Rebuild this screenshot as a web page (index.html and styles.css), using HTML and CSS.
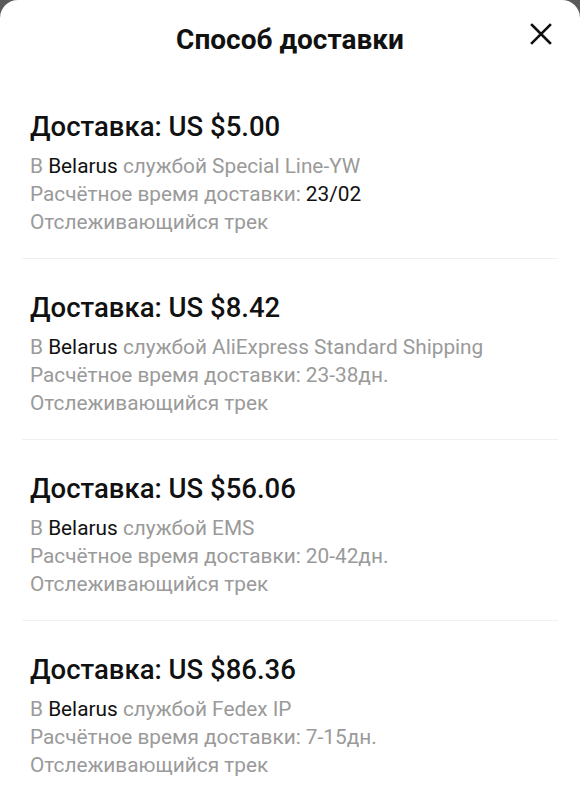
FILE: index.html
```html
<!DOCTYPE html>
<html lang="ru">
<head>
    <meta charset="UTF-8">
    <meta name="viewport" content="width=device-width, initial-scale=1.0">
    <title>Способ доставки</title>
    <link rel="stylesheet" href="styles.css">
</head>
<body>

<div class="sheet">
    <div class="sheet-head">
        <span></span>
        <h1 class="sheet-title">Способ доставки</h1>
        <button class="close-btn" aria-label="Закрыть">
            <svg width="22" height="22" viewBox="0 0 22 22"><path d="M2 2 L20 20 M20 2 L2 20" stroke="#111" stroke-width="2.6" stroke-linecap="square" fill="none"/></svg>
        </button>
    </div>

    <div class="ship-list">
        <div class="ship-item">
            <div class="ship-price">Доставка: US $5.00</div>
            <div class="ship-line">В <b>Belarus</b> службой Special Line-YW</div>
            <div class="ship-line">Расчётное время доставки: <b>23/02</b></div>
            <div class="ship-line">Отслеживающийся трек</div>
        </div>
        <div class="ship-item">
            <div class="ship-price">Доставка: US $8.42</div>
            <div class="ship-line">В <b>Belarus</b> службой AliExpress Standard Shipping</div>
            <div class="ship-line">Расчётное время доставки: 23-38дн.</div>
            <div class="ship-line">Отслеживающийся трек</div>
        </div>
        <div class="ship-item">
            <div class="ship-price">Доставка: US $56.06</div>
            <div class="ship-line">В <b>Belarus</b> службой EMS</div>
            <div class="ship-line">Расчётное время доставки: 20-42дн.</div>
            <div class="ship-line">Отслеживающийся трек</div>
        </div>
        <div class="ship-item">
            <div class="ship-price">Доставка: US $86.36</div>
            <div class="ship-line">В <b>Belarus</b> службой Fedex IP</div>
            <div class="ship-line">Расчётное время доставки: 7-15дн.</div>
            <div class="ship-line">Отслеживающийся трек</div>
        </div>
    </div>
</div>

</body>
</html>
```

FILE: styles.css
```css
:root { --ink: #111; --muted: #9a9a9a; --line: #f0f0f0; --backdrop: #5a5a5a; }

body { margin: 0; background: var(--backdrop); font-family: Roboto, "Noto Sans", sans-serif; color: var(--ink); }

/* --- Sheet --- */
.sheet { background: #fff; border-radius: 18px 18px 0 0; min-height: 100vh; }

.sheet-head { display: grid; grid-template-columns: 1fr auto 1fr; height: 78px; align-items: center; }
.sheet-title { margin: 0; font-size: 28px; font-weight: 700; line-height: 34px; padding-top: 1px; }
.close-btn { justify-self: end; align-self: start; margin: 23px 28px 0 0; padding: 0; border: none; background: none; width: 22px; height: 22px; cursor: pointer; }
.close-btn svg { display: block; }

/* --- Shipping options --- */
.ship-list { padding: 0 22px; }
.ship-item { padding: 32px 8px 22px; border-bottom: 1px solid var(--line); }
.ship-item:last-child { border-bottom: none; }

.ship-price { font-size: 27.5px; font-weight: 500; line-height: 34px; margin-bottom: 8px; }
.ship-line { font-size: 20.8px; line-height: 28px; color: var(--muted); }
.ship-line b { font-weight: 400; color: var(--ink); }
```
